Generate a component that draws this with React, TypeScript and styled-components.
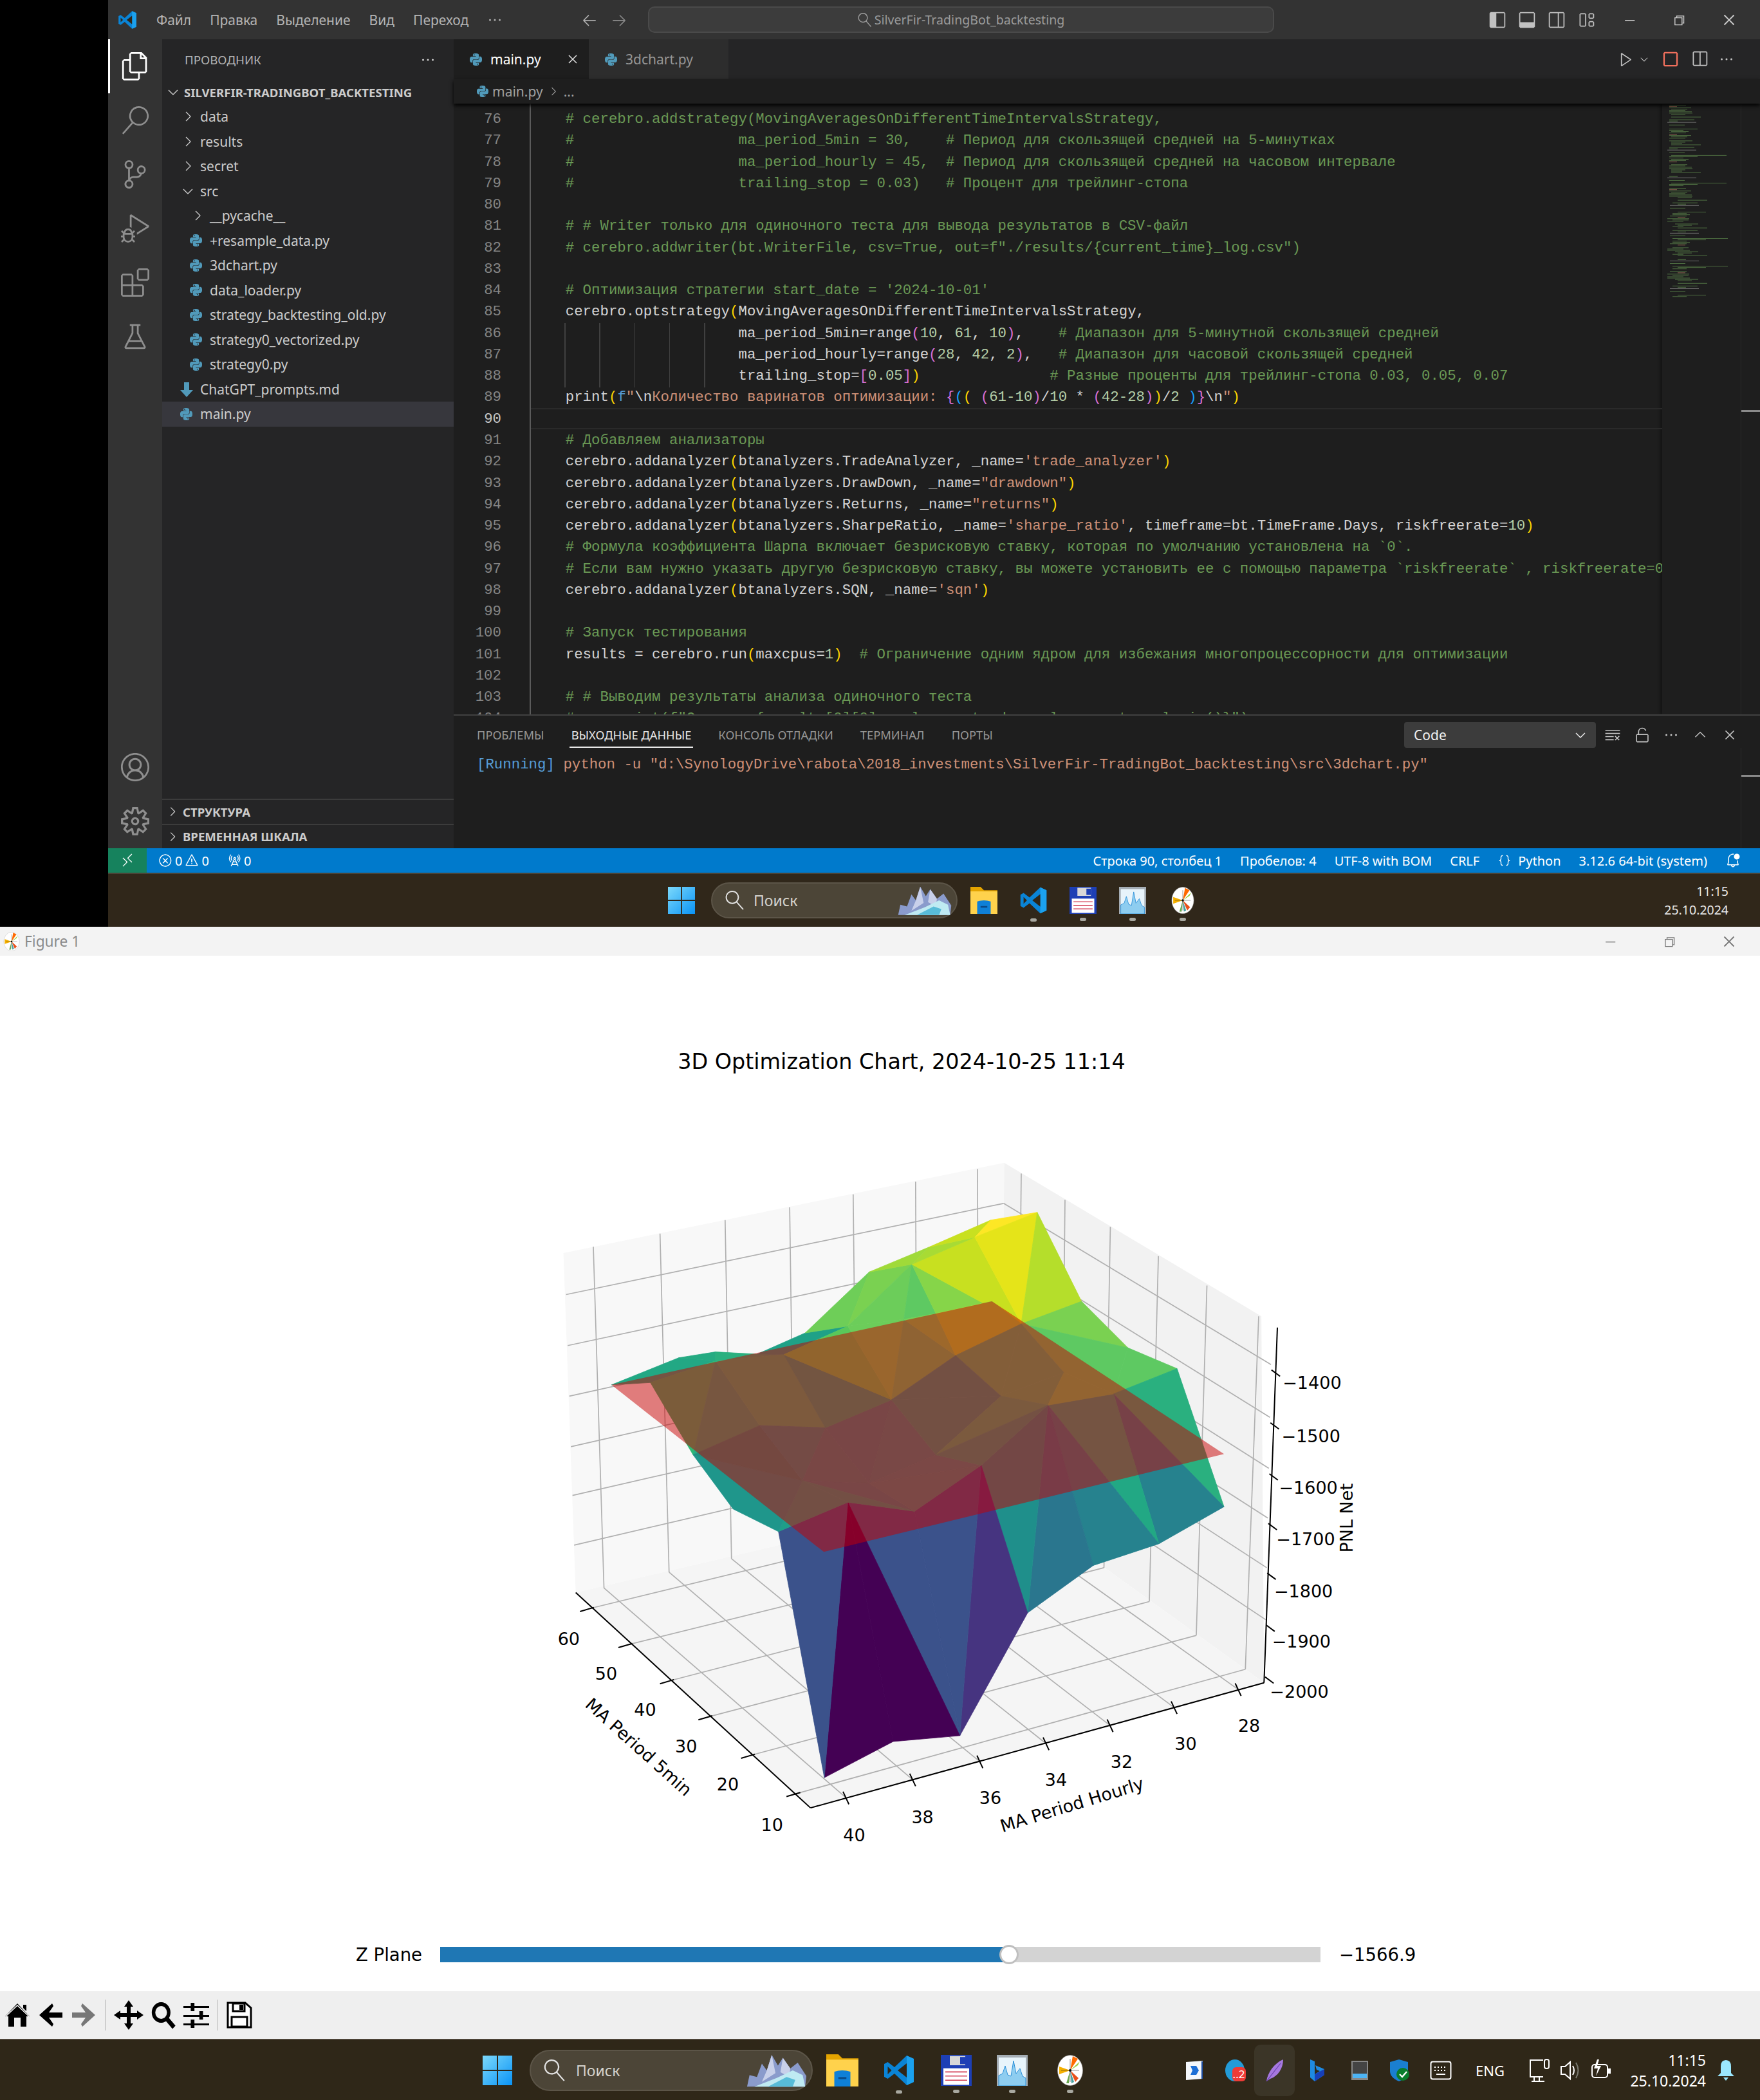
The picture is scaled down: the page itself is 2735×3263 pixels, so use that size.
import React from 'react';
import styled, { createGlobalStyle } from 'styled-components';
import { SiPython } from 'react-icons/si';
import {
    VscAccount,
    VscArrowLeft,
    VscArrowRight,
    VscBeaker,
    VscBellDot,
    VscChevronDown,
    VscChevronRight,
    VscChevronUp,
    VscChromeClose,
    VscChromeMinimize,
    VscChromeRestore,
    VscClearAll,
    VscClose,
    VscDebugAlt,
    VscDebugStop,
    VscEllipsis,
    VscError,
    VscExtensions,
    VscFiles,
    VscJson,
    VscLayout,
    VscLayoutPanel,
    VscLayoutSidebarLeft,
    VscLayoutSidebarRightOff,
    VscPlay,
    VscRadioTower,
    VscRemote,
    VscSearch,
    VscSettingsGear,
    VscSourceControl,
    VscSplitHorizontal,
    VscUnlock,
    VscWarning,
} from 'react-icons/vsc';

const uiFont = `'Noto Sans', 'Open Sans', sans-serif`;
const monoFont = `'Liberation Mono', monospace`;
const plotFont = `'DejaVu Sans', sans-serif`;

const GlobalStyle = createGlobalStyle`
    html, body {
        margin: 0;
        padding: 0;
        background: #fff;
    }
    * {
        box-sizing: border-box;
    }
`;

const colors = {
    t: '#d4d4d4',
    c: '#6a9955',
    s: '#ce9178',
    n: '#b5cea8',
    y: '#ffd700',
    p: '#da70d6',
    b: '#179fff',
    k: '#569cd6',
};
type Tok = [string, keyof typeof colors];

const analyzer = (name: string, rest: Tok[]): Tok[] => [
    ['    cerebro.addanalyzer', 't'],
    ['(', 'y'],
    [`btanalyzers.${name}, _name=`, 't'],
    ...rest,
];

const codeLines: Tok[][] = [
    [['    # cerebro.addstrategy(MovingAveragesOnDifferentTimeIntervalsStrategy,', 'c']],
    [['    #                   ma_period_5min = 30,    # Период для скользящей средней на 5-минутках', 'c']],
    [['    #                   ma_period_hourly = 45,  # Период для скользящей средней на часовом интервале', 'c']],
    [['    #                   trailing_stop = 0.03)   # Процент для трейлинг-стопа', 'c']],
    [],
    [['    # # Writer только для одиночного теста для вывода результатов в CSV-файл', 'c']],
    [['    # cerebro.addwriter(bt.WriterFile, csv=True, out=f"./results/{current_time}_log.csv")', 'c']],
    [],
    [["    # Оптимизация стратегии start_date = '2024-10-01'", 'c']],
    [['    cerebro.optstrategy', 't'], ['(', 'y'], ['MovingAveragesOnDifferentTimeIntervalsStrategy,', 't']],
    [
        ['                        ma_period_5min=range', 't'],
        ['(', 'p'],
        ['10', 'n'],
        [', ', 't'],
        ['61', 'n'],
        [', ', 't'],
        ['10', 'n'],
        [')', 'p'],
        [',', 't'],
        ['    # Диапазон для 5-минутной скользящей средней', 'c'],
    ],
    [
        ['                        ma_period_hourly=range', 't'],
        ['(', 'p'],
        ['28', 'n'],
        [', ', 't'],
        ['42', 'n'],
        [', ', 't'],
        ['2', 'n'],
        [')', 'p'],
        [',', 't'],
        ['   # Диапазон для часовой скользящей средней', 'c'],
    ],
    [
        ['                        trailing_stop=', 't'],
        ['[', 'p'],
        ['0.05', 'n'],
        [']', 'p'],
        [')', 'y'],
        ['               # Разные проценты для трейлинг-стопа 0.03, 0.05, 0.07', 'c'],
    ],
    [
        ['    print', 't'],
        ['(', 'y'],
        ['f', 'k'],
        ['"', 's'],
        ['\\n', 't'],
        ['Количество варинатов оптимизации: ', 's'],
        ['{', 'p'],
        ['(', 'b'],
        ['(', 'y'],
        [' ', 't'],
        ['(', 'p'],
        ['61-10', 'n'],
        [')', 'p'],
        ['/', 't'],
        ['10', 'n'],
        [' * ', 't'],
        ['(', 'p'],
        ['42-28', 'n'],
        [')', 'p'],
        [')', 'y'],
        ['/', 't'],
        ['2', 'n'],
        [' ', 't'],
        [')', 'b'],
        ['}', 'p'],
        ['\\n', 't'],
        ['"', 's'],
        [')', 'y'],
    ],
    [],
    [['    # Добавляем анализаторы', 'c']],
    analyzer('TradeAnalyzer', [["'trade_analyzer'", 's'], [')', 'y']]),
    analyzer('DrawDown', [['"drawdown"', 's'], [')', 'y']]),
    analyzer('Returns', [['"returns"', 's'], [')', 'y']]),
    analyzer('SharpeRatio', [
        ["'sharpe_ratio'", 's'],
        [', timeframe=bt.TimeFrame.Days, riskfreerate=', 't'],
        ['10', 'n'],
        [')', 'y'],
    ]),
    [['    # Формула коэффициента Шарпа включает безрисковую ставку, которая по умолчанию установлена на `0`.', 'c']],
    [['    # Если вам нужно указать другую безрисковую ставку, вы можете установить ее с помощью параметра `riskfreerate` , riskfreerate=0', 'c']],
    analyzer('SQN', [["'sqn'", 's'], [')', 'y']]),
    [],
    [['    # Запуск тестирования', 'c']],
    [
        ['    results = cerebro.run', 't'],
        ['(', 'y'],
        ['maxcpus=', 't'],
        ['1', 'n'],
        [')', 'y'],
        ['  # Ограничение одним ядром для избежания многопроцессорности для оптимизации', 'c'],
    ],
    [],
    [['    # # Выводим результаты анализа одиночного теста', 'c']],
    [['    #     print(f"Сделки: {results[0][0].analyzers.trade_analyzer.get_analysis()}")', 'c']],
];

const treeRows: { label: string; depth: number; kind: 'closed' | 'open' | 'py' | 'md'; active?: boolean }[] = [
    { label: 'data', depth: 0, kind: 'closed' },
    { label: 'results', depth: 0, kind: 'closed' },
    { label: 'secret', depth: 0, kind: 'closed' },
    { label: 'src', depth: 0, kind: 'open' },
    { label: '__pycache__', depth: 1, kind: 'closed' },
    { label: '+resample_data.py', depth: 1, kind: 'py' },
    { label: '3dchart.py', depth: 1, kind: 'py' },
    { label: 'data_loader.py', depth: 1, kind: 'py' },
    { label: 'strategy_backtesting_old.py', depth: 1, kind: 'py' },
    { label: 'strategy0_vectorized.py', depth: 1, kind: 'py' },
    { label: 'strategy0.py', depth: 1, kind: 'py' },
    { label: 'ChatGPT_prompts.md', depth: 0, kind: 'md' },
    { label: 'main.py', depth: 0, kind: 'py', active: true },
];

const App: React.FC = () => (
    <Page>
        <GlobalStyle />
        <TopArea>
            <Gutter />
            <Desktop>
                <TitleBar>
                    <TitleLeft>
                        <VsLogo size={30} />
                        <MenuItem>Файл</MenuItem>
                        <MenuItem>Правка</MenuItem>
                        <MenuItem>Выделение</MenuItem>
                        <MenuItem>Вид</MenuItem>
                        <MenuItem>Переход</MenuItem>
                        <VscEllipsis size={24} color="#b0b0b0" />
                        <NavArrows>
                            <VscArrowLeft size={26} color="#b0b0b0" />
                            <VscArrowRight size={26} color="#8a8a8a" />
                        </NavArrows>
                    </TitleLeft>
                    <CommandBox>
                        <VscSearch size={22} style={{ transform: 'scaleX(-1)' }} />
                        SilverFir-TradingBot_backtesting
                    </CommandBox>
                    <TitleRight>
                        <VscLayoutSidebarLeft size={28} />
                        <VscLayoutPanel size={28} />
                        <VscLayoutSidebarRightOff size={28} />
                        <VscLayout size={28} />
                        <WindowButtons $color="#cfcfcf" $gap={55}>
                            <VscChromeMinimize size={22} />
                            <VscChromeRestore size={22} />
                            <VscChromeClose size={24} />
                        </WindowButtons>
                    </TitleRight>
                </TitleBar>
                <Workbench>
                    <ActivityBar>
                        <ActivityItem $active>
                            <VscFiles size={44} color="#fff" />
                        </ActivityItem>
                        <ActivityItem>
                            <VscSearch size={44} />
                        </ActivityItem>
                        <ActivityItem>
                            <VscSourceControl size={44} />
                        </ActivityItem>
                        <ActivityItem>
                            <VscDebugAlt size={44} />
                        </ActivityItem>
                        <ActivityItem>
                            <VscExtensions size={44} />
                        </ActivityItem>
                        <ActivityItem>
                            <VscBeaker size={44} />
                        </ActivityItem>
                        <ActivitySpacer />
                        <ActivityItem>
                            <VscAccount size={44} />
                        </ActivityItem>
                        <ActivityItem>
                            <VscSettingsGear size={44} />
                        </ActivityItem>
                    </ActivityBar>
                    <SideBar>
                        <SideHeader>
                            ПРОВОДНИК
                            <VscEllipsis size={24} color="#cccccc" />
                        </SideHeader>
                        <RootRow>
                            <VscChevronDown size={24} />
                            SILVERFIR-TRADINGBOT_BACKTESTING
                        </RootRow>
                        {treeRows.map((r) => (
                            <TreeRow key={r.label} $depth={r.depth} $active={r.active}>
                                <TreeIcon>
                                    {r.kind === 'closed' && <VscChevronRight size={24} />}
                                    {r.kind === 'open' && <VscChevronDown size={24} />}
                                    {r.kind === 'py' && <SiPython size={19} color="#519aba" />}
                                    {r.kind === 'md' && <MdIcon />}
                                </TreeIcon>
                                {r.label}
                            </TreeRow>
                        ))}
                        <SideSpacer />
                        <CollapsedPane>
                            <VscChevronRight size={22} />
                            СТРУКТУРА
                        </CollapsedPane>
                        <CollapsedPane>
                            <VscChevronRight size={22} />
                            ВРЕМЕННАЯ ШКАЛА
                        </CollapsedPane>
                    </SideBar>
                    <EditorColumn>
                        <TabStrip>
                            <Tab $active>
                                <SiPython size={19} color="#519aba" />
                                <TabLabel>main.py</TabLabel>
                                <VscClose size={24} color="#e0e0e0" />
                            </Tab>
                            <Tab>
                                <SiPython size={19} color="#519aba" />
                                <TabLabel>3dchart.py</TabLabel>
                            </Tab>
                            <EditorActions>
                                <VscPlay size={26} />
                                <VscChevronDown size={18} />
                                <VscDebugStop size={30} color="#f1705d" />
                                <VscSplitHorizontal size={28} />
                                <VscEllipsis size={24} />
                            </EditorActions>
                        </TabStrip>
                        <Breadcrumb>
                            <SiPython size={18} color="#519aba" />
                            main.py
                            <VscChevronRight size={20} />
                            ...
                        </Breadcrumb>
                        <CodeArea>
                            <LineNumbers>
                                {codeLines.map((_, i) => (
                                    <LineNumber key={i} $current={i + 76 === 90}>
                                        {i + 76}
                                    </LineNumber>
                                ))}
                            </LineNumbers>
                            <CodePane>
                                <CurrentLine />
                                <IndentGuides>
                                    {[0, 1, 2, 3, 4].map((i) => (
                                        <IndentGuide key={i} />
                                    ))}
                                </IndentGuides>
                                {codeLines.map((toks, i) => (
                                    <CodeLine key={i}>
                                        {toks.map(([text, color], j) => (
                                            <Token key={j} $c={colors[color]}>
                                                {text}
                                            </Token>
                                        ))}
                                    </CodeLine>
                                ))}
                            </CodePane>
                            <Minimap>
                                <MinimapDrawing />
                            </Minimap>
                            <ScrollGutter>
                                <ScrollMark $top={476} />
                            </ScrollGutter>
                        </CodeArea>
                        <Panel>
                            <PanelHeader>
                                <PanelTab>ПРОБЛЕМЫ</PanelTab>
                                <PanelTab $active>ВЫХОДНЫЕ ДАННЫЕ</PanelTab>
                                <PanelTab>КОНСОЛЬ ОТЛАДКИ</PanelTab>
                                <PanelTab>ТЕРМИНАЛ</PanelTab>
                                <PanelTab>ПОРТЫ</PanelTab>
                                <PanelTools>
                                    <OutputSelect>
                                        Code
                                        <VscChevronDown size={24} />
                                    </OutputSelect>
                                    <VscClearAll size={26} />
                                    <VscUnlock size={26} />
                                    <VscEllipsis size={24} />
                                    <VscChevronUp size={26} />
                                    <VscClose size={26} />
                                </PanelTools>
                            </PanelHeader>
                            <OutputBody>
                                <OutputText>
                                    <Token $c="#569cd6">[Running]</Token>
                                    <Token $c="#ce9178">
                                        {' '}
                                        python -u "d:\SynologyDrive\rabota\2018_investments\SilverFir-TradingBot_backtesting\src\3dchart.py"
                                    </Token>
                                </OutputText>
                                <ScrollGutter>
                                    <ScrollMark $top={42} />
                                </ScrollGutter>
                            </OutputBody>
                        </Panel>
                    </EditorColumn>
                </Workbench>
                <StatusBar>
                    <RemoteBadge>
                        <VscRemote size={24} />
                    </RemoteBadge>
                    <StatusLeft>
                        <VscError size={22} />0
                        <VscWarning size={22} />0
                        <StatusGap />
                        <VscRadioTower size={22} />0
                    </StatusLeft>
                    <StatusRight>
                        <span>Строка 90, столбец 1</span>
                        <span>Пробелов: 4</span>
                        <span>UTF-8 with BOM</span>
                        <span>CRLF</span>
                        <StatusPair>
                            <VscJson size={22} />
                            Python
                        </StatusPair>
                        <span>3.12.6 64-bit (system)</span>
                        <VscBellDot size={24} />
                    </StatusRight>
                </StatusBar>
                <TopTaskbar>
                    <TaskSlot $ml={870}>
                        <WinLogo size={42} />
                    </TaskSlot>
                    <SearchPill $w={383} $h={56} $ml={25}>
                        <PillIcon size={30} />
                        <PillText $gap={14}>Поиск</PillText>
                        <Crystal width={86} />
                    </SearchPill>
                    <TaskSlot $ml={20}>
                        <FolderIcon size={42} />
                    </TaskSlot>
                    <TaskSlot $ml={34} $dot>
                        <VsLogo size={44} />
                    </TaskSlot>
                    <TaskSlot $ml={34} $dot>
                        <FloppyIcon size={42} />
                    </TaskSlot>
                    <TaskSlot $ml={35} $dot>
                        <ChartIcon size={42} />
                    </TaskSlot>
                    <TaskSlot $ml={36} $dot>
                        <PieIcon size={42} />
                    </TaskSlot>
                    <TopClock>
                        <span>11:15</span>
                        <span>25.10.2024</span>
                    </TopClock>
                </TopTaskbar>
            </Desktop>
        </TopArea>
        <FigureTitle>
            <PieIcon size={30} />
            <FigureName>Figure 1</FigureName>
            <WindowButtons $color="#777" $gap={70}>
                <VscChromeMinimize size={22} />
                <VscChromeRestore size={22} />
                <VscChromeClose size={24} />
            </WindowButtons>
        </FigureTitle>
        <Canvas>
            <ChartTitle>3D Optimization Chart, 2024-10-25 11:14</ChartTitle>
            <ChartHolder>
                <Chart3D />
            </ChartHolder>
            <SliderRow>
                <SliderLabel>Z Plane</SliderLabel>
                <SliderTrack>
                    <SliderFill style={{ width: `${(884 / 1368) * 100}%` }} />
                    <SliderKnob style={{ left: `${(884 / 1368) * 100}%` }} />
                </SliderTrack>
                <SliderValue>−1566.9</SliderValue>
            </SliderRow>
        </Canvas>
        <Toolbar>
            <ToolGlyph><HomeGlyph /></ToolGlyph>
            <ToolGlyph><BackGlyph color="#000" /></ToolGlyph>
            <ToolGlyph><BackGlyph color="#777" flip /></ToolGlyph>
            <ToolSep />
            <ToolGlyph><PanGlyph /></ToolGlyph>
            <ToolGlyph><ZoomGlyph /></ToolGlyph>
            <ToolGlyph><SlidersGlyph /></ToolGlyph>
            <ToolSep />
            <ToolGlyph><SaveGlyph /></ToolGlyph>
        </Toolbar>
        <BottomTaskbar>
            <TaskSlot $ml={750}>
                <WinLogo size={46} />
            </TaskSlot>
            <SearchPill $w={440} $h={64} $ml={27}>
                <PillIcon size={34} />
                <PillText $gap={16}>Поиск</PillText>
                <Crystal width={96} />
            </SearchPill>
            <TaskSlot $ml={21}>
                <FolderIcon size={50} />
            </TaskSlot>
            <TaskSlot $ml={38} $dot>
                <VsLogo size={50} />
            </TaskSlot>
            <TaskSlot $ml={40} $dot>
                <FloppyIcon size={48} />
            </TaskSlot>
            <TaskSlot $ml={39} $dot>
                <ChartIcon size={48} />
            </TaskSlot>
            <TaskSlot $ml={42} $dot>
                <PieIcon size={48} />
            </TaskSlot>
            <Tray>
                <DocTray />
                <BadgeTray />
                <FeatherSlot>
                    <FeatherTray />
                </FeatherSlot>
                <BingTray />
                <ServerTray />
                <ShieldTray />
                <KeyboardTray />
                <TrayText>ENG</TrayText>
                <MonitorTray />
                <SpeakerTray />
                <BatteryTray />
            </Tray>
            <BottomClock>
                <span>11:15</span>
                <span>25.10.2024</span>
            </BottomClock>
            <BellGlyph />
        </BottomTaskbar>
    </Page>
);

/* ---------- 3d chart, points taken from the picture ---------- */

const sx = (x: number) => x / 1.206;
const sy = (y: number) => y / 1.4255;

const pts: Record<string, [number, number]> = {
    A: [955, 148], B: [868, 165], C: [838, 203], D: [752, 225], E: [720, 263], F: [640, 280],
    G: [1038, 345], H: [925, 395], I: [1125, 448], J: [1217, 494], K: [1305, 800], L: [1183, 882],
    M: [1060, 930], N: [937, 1035], O: [810, 1307], P: [685, 1320], Q: [556, 1400], R: [470, 855],
    S: [385, 805], T: [310, 685], U: [230, 525], V: [157, 530], W: [283, 470], X: [352, 457],
    Y: [430, 462], Z: [520, 415], a: [600, 400], b: [705, 385], c: [765, 372], d: [870, 345],
    e: [352, 477], f: [480, 463], g: [435, 620], h: [558, 625], i: [682, 563], j: [802, 465],
    k: [887, 555], l: [975, 575], n: [1005, 503], o: [1098, 550], p: [765, 685], q: [850, 708],
    r: [640, 748], s: [725, 810], t: [600, 790], u: [515, 742],
};

const facets: [string, string][] = [
    ['#22a884', 'V W e U'], ['#25ab82', 'W X e'], ['#2ab07f', 'X Y f e'], ['#1fa187', 'Y Z a f'],
    ['#6ece58', 'Z F a'], ['#7ad151', 'F E a'], ['#6ccd5a', 'E b a'], ['#5ec962', 'E c b'],
    ['#86d549', 'E H d c'], ['#c8e020', 'E C H'], ['#a8db34', 'D C E'], ['#a0da39', 'F D E'],
    ['#c8e020', 'D B C'], ['#fde725', 'B A C'], ['#e5e419', 'C A H'], ['#b5de2b', 'A G H'],
    ['#7ad151', 'G I H'], ['#5ec962', 'H I o n'], ['#5ec962', 'I J o'], ['#2ab07f', 'o K J'],
    ['#26828e', 'o L K'], ['#22a884', 'l L o'], ['#26828e', 'l M L'], ['#2a768e', 'l N M'],
    ['#1f8f8b', 'q l N'], ['#463480', 'q N O'], ['#3b528b', 's q O'], ['#3b528b', 't s O'],
    ['#440154', 't O P'], ['#440154', 't P Q'], ['#3b528b', 'R t Q'], ['#1f9e89', 'R u t'],
    ['#1f968b', 'S R u T'], ['#2eb874', 'U e T'], ['#27ad81', 'e g T'], ['#32b47a', 'e f h g'],
    ['#209080', 'T g u'], ['#20968b', 'g h u'], ['#2a8f8b', 'h r u'], ['#2a8c8c', 'u r s'],
    ['#1f9e89', 'u s t'], ['#2a8c8c', 'h i r'], ['#2a908c', 'i p r'], ['#2e908c', 'r p q'],
    ['#30908a', 'r q s'], ['#1eaa82', 'f i h'], ['#5ac85a', 'f a i'], ['#6ccd5a', 'a b i'],
    ['#56c667', 'b j i'], ['#73d056', 'b c j'], ['#9bd93c', 'c d H j'], ['#3fbc73', 'j H k'],
    ['#1fa187', 'i j k'], ['#3fbc73', 'H n k'], ['#3ebc73', 'k n l'], ['#5ec962', 'n o l'],
    ['#1fa187', 'i k p'], ['#2fb47c', 'k l p'], ['#20a386', 'p l q'],
];

const poly = (list: [number, number][]) => list.map(([x, y]) => `${sx(x)},${sy(y)}`).join(' ');

const leftVerticals: [number, number, number, number][] = [
    [123, 224, 143, 980], [248, 195, 265, 945], [370, 165, 382, 915], [491, 137, 500, 882],
    [610, 108, 617, 852], [727, 80, 730, 825], [843, 52, 845, 795],
];
const rightVerticals: [number, number, number, number][] = [
    [925, 62, 918, 795], [1007, 120, 1000, 868], [1092, 180, 1080, 935],
    [1182, 245, 1165, 1010], [1273, 310, 1253, 1085], [1370, 378, 1345, 1160],
];
const zLeft = [330, 443, 555, 667, 775, 885];
const zBack = [128, 235, 342, 449, 556, 663];
const zRight = [505, 622, 735, 845, 955, 1070];
const xTicks: [number, number][] = [[118, 1025], [190, 1105], [268, 1185], [340, 1265], [420, 1350], [505, 1435]];
const yTicks: [number, number][] = [[597, 1445], [722, 1405], [848, 1365], [972, 1325], [1092, 1285], [1212, 1245], [1332, 1205]];
const xLabels: [string, number, number][] = [['60', 77, 1093], ['50', 147, 1170], ['40', 220, 1250], ['30', 297, 1330], ['20', 375, 1415], ['10', 458, 1505]];
const yLabels: [string, number, number][] = [['40', 612, 1528], ['38', 740, 1487], ['36', 867, 1445], ['34', 990, 1405], ['32', 1113, 1365], ['30', 1233, 1325], ['28', 1352, 1285]];
const zLabels: [string, number, number][] = [['−1400', 1470, 525], ['−1500', 1468, 643], ['−1600', 1463, 758], ['−1700', 1458, 872], ['−1800', 1454, 987], ['−1900', 1450, 1098], ['−2000', 1446, 1210]];
const floorEnds: [number, number][] = [[918, 795], [1000, 868], [1080, 935], [1165, 1010], [1253, 1085], [1345, 1160]];

const Grid: React.FC<{ a: [number, number]; b: [number, number] }> = ({ a, b }) => (
    <line x1={sx(a[0])} y1={sy(a[1])} x2={sx(b[0])} y2={sy(b[1])} stroke="#b0b0b0" strokeWidth={1.7} />
);

const Chart3D: React.FC = () => (
    <svg width={1300} height={1100} viewBox="0 0 1300 1100">
        <polygon points={poly([[67, 238], [893, 38], [888, 770], [90, 990]])} fill="#f8f8f8" />
        <polygon points={poly([[893, 38], [1375, 378], [1380, 1190], [888, 770]])} fill="#f2f2f2" />
        <polygon points={poly([[90, 990], [888, 770], [1380, 1190], [530, 1467]])} fill="#f5f5f5" />
        {leftVerticals.map(([a, b, c, d], i) => (
            <Grid key={i} a={[a, b]} b={[c, d]} />
        ))}
        {rightVerticals.map(([a, b, c, d], i) => (
            <Grid key={i} a={[a, b]} b={[c, d]} />
        ))}
        {zLeft.map((y, i) => (
            <Grid key={y} a={[72 + i * 3, y]} b={[892, zBack[i]]} />
        ))}
        {zRight.map((y, i) => (
            <Grid key={y} a={[892, zBack[i]]} b={[1393 - i * 2, y - 20]} />
        ))}
        {xTicks.map((t, i) => (
            <Grid key={i} a={t} b={floorEnds[i]} />
        ))}
        {yTicks.map((t, i) => (
            <Grid key={i} a={t} b={[leftVerticals[i][2], leftVerticals[i][3]]} />
        ))}
        {[[90, 990, 530, 1467], [530, 1467, 1380, 1190], [1380, 1190, 1405, 403]].map(([a, b, c, d], i) => (
            <line key={i} x1={sx(a)} y1={sy(b)} x2={sx(c)} y2={sy(d)} stroke="#000" strokeWidth={2} />
        ))}
        {xTicks.map(([x, y], i) => (
            <line key={i} x1={sx(x - 20)} y1={sy(y + 7)} x2={sx(x + 6)} y2={sy(y - 2)} stroke="#000" strokeWidth={2} />
        ))}
        {yTicks.map(([x, y], i) => (
            <line key={i} x1={sx(x - 6)} y1={sy(y - 14)} x2={sx(x + 5)} y2={sy(y + 14)} stroke="#000" strokeWidth={2} />
        ))}
        {[505, 622, 735, 845, 955, 1070, 1185].map((y, i) => (
            <line key={y} x1={sx(1394 - i * 2)} y1={sy(y - 8)} x2={sx(1410 - i * 2)} y2={sy(y + 6)} stroke="#000" strokeWidth={2} />
        ))}
        {facets.map(([fill, names], i) => {
            const p = poly(names.split(' ').map((n) => pts[n]));
            return <polygon key={i} points={p} fill={fill} stroke={fill} strokeWidth={0.8} />;
        })}
        <polygon points={poly([[157, 530], [870, 345], [1305, 683], [555, 900]])} fill="rgb(200,0,0)" fillOpacity={0.5} />
        {[...xLabels, ...yLabels, ...zLabels].map(([label, x, y]) => (
            <PlotText key={label + x} x={sx(x)} y={sy(y)} textAnchor="middle" dominantBaseline="central">
                {label}
            </PlotText>
        ))}
        <PlotText transform={`translate(${sx(208)} ${sy(1332)}) rotate(42)`} textAnchor="middle" dominantBaseline="central">
            MA Period 5min
        </PlotText>
        <PlotText transform={`translate(${sx(1020)} ${sy(1460)}) rotate(-17)`} textAnchor="middle" dominantBaseline="central">
            MA Period Hourly
        </PlotText>
        <PlotText transform={`translate(${sx(1535)} ${sy(825)}) rotate(-90)`} textAnchor="middle" dominantBaseline="central">
            PNL Net
        </PlotText>
    </svg>
);

const PlotText = styled.text`
    font-family: ${plotFont};
    font-size: 27px;
    fill: #000;
`;

/* ---------- small drawn icons ---------- */

const MinimapDrawing: React.FC = () => {
    const rows: React.ReactNode[] = [];
    let seed = 17;
    for (let i = 0; i < 146; i++) {
        seed = (seed * 73 + 41) % 211;
        if (seed % 6 === 0 || i % 9 === 8) {
            continue;
        }
        const indent = i < 70 ? (seed % 3) * 3 : (seed % 5) * 4;
        const width = 10 + (seed % 38) + (seed % 13 === 0 ? 46 : 0);
        const fill = seed % 3 === 0 ? '#8a8a8a' : seed % 11 === 0 ? '#a9745f' : '#5f8a4d';
        rows.push(<rect key={i} x={indent} y={i * 2.05} width={Math.min(width, 96 - indent)} height={1} fill={fill} fillOpacity={0.75} />);
    }
    return (
        <svg width={100} height={310} viewBox="0 0 100 310">
            {rows}
        </svg>
    );
};

const VsLogo: React.FC<{ size: number }> = ({ size }) => (
    <svg width={size} height={size} viewBox="0 0 100 100">
        <path d="M74 4 96 14v72L74 96 36 60 15 76 4 70V30l11-6 21 16z" fill="#0a84d6" />
        <path d="M74 4 96 14v72L74 96z" fill="#1ba1ee" />
        <path d="M15 38v24l12-12z" fill="#2f2618" />
        <path d="M74 28 46 50l28 22z" fill="#2f2618" />
    </svg>
);

const MdIcon: React.FC = () => (
    <svg width={20} height={26} viewBox="0 0 20 26">
        <path d="M6 2h8v12h6L10 25 0 14h6z" fill="#519aba" />
    </svg>
);

const WinLogo: React.FC<{ size: number }> = ({ size }) => (
    <svg width={size} height={size} viewBox="0 0 46 46">
        <defs>
            <linearGradient id="win" x1="0" y1="0" x2="1" y2="1">
                <stop offset="0" stopColor="#7cd9fb" />
                <stop offset="1" stopColor="#0a93f5" />
            </linearGradient>
        </defs>
        <path d="M0 0h22v22H0zM24 0h22v22H24zM0 24h22v22H0zM24 24h22v22H24z" fill="url(#win)" />
    </svg>
);

const FolderIcon: React.FC<{ size: number }> = ({ size }) => (
    <svg width={size} height={size} viewBox="0 0 48 48">
        <path d="M0 0h18l6 6h24v42H0z" fill="#e4a400" />
        <path d="M0 8h48v40H0z" fill="#ffd24c" />
        <path d="M12 26q12-4 24 0v22H12z" fill="#0f80d7" />
        <path d="M18 34h12v3H18z" fill="#0b4a87" />
    </svg>
);

const FloppyIcon: React.FC<{ size: number }> = ({ size }) => (
    <svg width={size} height={size} viewBox="0 0 48 60" preserveAspectRatio="none">
        <path d="M0 0h48v60H0z" fill="#1d3fb5" />
        <path d="M14 2h24v18H14z" fill="#d8d8d8" />
        <path d="M30 4h8v14h-8z" fill="#1d3fb5" />
        <path d="M4 26h40v32H4z" fill="#fff" />
        <path d="M7 32h34v2H7zM7 40h34v2H7zM7 48h34v2H7z" fill="#d33f56" />
    </svg>
);

const ChartIcon: React.FC<{ size: number }> = ({ size }) => (
    <svg width={size} height={size} viewBox="0 0 48 48">
        <path d="M0 0h48v48H0z" fill="#a5adb4" />
        <path d="M3 4h42v40H3z" fill="#e8f4fb" />
        <path d="M3 32l6-3 4-12 4 14 5 2 4-24 4 20 6-8 4 12 5 3v12H3z" fill="#8ecdf0" stroke="#2b90d9" strokeWidth={1} />
    </svg>
);

const PieIcon: React.FC<{ size: number }> = ({ size }) => (
    <svg width={size} height={size} viewBox="0 0 40 48">
        <ellipse cx="20" cy="24" rx="19.5" ry="23.5" fill="#fff" stroke="#aaa" strokeWidth={0.6} />
        <path d="M20 24 24 2 32 6z" fill="#ff6a00" />
        <path d="M20 24 3 18 3 30z" fill="#f5b000" />
        <path d="M20 24 32 16 35 10z" fill="#9ccc3c" />
        <path d="M20 24 33 36 28 42z" fill="#e8501a" />
        <path d="M20 24 14 44 18 44z" fill="#6aa84f" />
        <path d="M20 24 22 44 26 42z" fill="#46a0a0" />
        <circle cx="20" cy="24" r="2" fill="#000" />
        <path d="M20 6v36M6 24h28" stroke="#222" strokeWidth={0.5} />
    </svg>
);

const Crystal: React.FC<{ width: number }> = ({ width }) => (
    <svg width={width} height={width * 0.56} viewBox="0 0 100 72" preserveAspectRatio="none">
        <path d="M2 70 6 46 18 50 26 22 34 36 42 4 52 26 60 10 72 32 84 20 98 48 96 70z" fill="#8a9bcc" />
        <path d="M26 60 34 36 42 4 48 42zM60 10 72 32 70 50 56 40z" fill="#c8d0ea" />
        <path d="M14 70 50 52 76 36 92 46 96 70z" fill="#bfeaf2" />
        <path d="M36 70 66 50 80 56 76 70z" fill="#58bcd8" />
    </svg>
);

const DocTray: React.FC = () => (
    <TraySvg width={30} height={30} viewBox="0 0 30 30" $ml={0}>
        <path d="M2 2 28 0v28L2 30z" fill="#f4f7fb" />
        <path d="M9 8h9l4 7-4 7H9l3-7z" fill="#1d6fd6" />
        <path d="M26 1h2v27h-2z" fill="#1d4fa8" />
    </TraySvg>
);

const BadgeTray: React.FC = () => (
    <TraySvg width={34} height={34} viewBox="0 0 34 34" $ml={33}>
        <ellipse cx="15" cy="17" rx="15" ry="17" fill="#239bd8" />
        <rect x="11" y="12" width="21" height="22" rx="6" fill="#ef3b36" />
        <TrayBadgeText x="21" y="29" textAnchor="middle">
            ..2
        </TrayBadgeText>
    </TraySvg>
);

const TrayBadgeText = styled.text`
    font-family: ${uiFont};
    font-size: 17px;
    fill: #fff;
`;

const FeatherTray: React.FC = () => (
    <svg width={30} height={34} viewBox="0 0 30 34">
        <path d="M2 34C4 20 14 6 28 0 28 14 20 26 8 30z" fill="#a678e0" />
        <path d="M2 34 24 6" stroke="#6b42b0" strokeWidth={1.2} />
    </svg>
);

const BingTray: React.FC = () => (
    <TraySvg width={24} height={34} viewBox="0 0 24 34" $ml={22}>
        <path d="M2 0 9 3v20l8-5-5-2-2-7 14 6v9L9 34 2 28z" fill="#1f8ae0" />
        <path d="M9 23 24 15v9L9 34z" fill="#173fb8" />
    </TraySvg>
);

const ServerTray: React.FC = () => (
    <TraySvg width={26} height={30} viewBox="0 0 26 30" $ml={42}>
        <path d="M0 0h26v30H0z" fill="#888" />
        <path d="M2 2h22v18H2z" fill="#444" />
        <path d="M2 20h22v7H2z" fill="#4db4f5" />
    </TraySvg>
);

const ShieldTray: React.FC = () => (
    <TraySvg width={32} height={34} viewBox="0 0 32 34" $ml={34}>
        <path d="M14 0l14 4v14q0 10-14 16Q0 28 0 18V4z" fill="#1a7fd0" />
        <circle cx="20" cy="23" r="10" fill="#0a7d2c" />
        <path d="M15 23l4 4 7-8" fill="none" stroke="#fff" strokeWidth={2.4} />
    </TraySvg>
);

const KeyboardTray: React.FC = () => (
    <TraySvg width={34} height={30} viewBox="0 0 34 30" $ml={30}>
        <rect x="1.5" y="1.5" width="31" height="27" rx="3" fill="none" stroke="#fff" strokeWidth={2} />
        <path d="M7 9h2v2H7zM12 9h2v2h-2zM17 9h2v2h-2zM22 9h2v2h-2zM7 14h2v2H7zM12 14h2v2h-2zM17 14h2v2h-2zM22 14h2v2h-2zM10 20h14v2H10z" fill="#fff" />
    </TraySvg>
);

const MonitorTray: React.FC = () => (
    <TraySvg width={32} height={36} viewBox="0 0 32 36" $ml={38}>
        <path d="M22 2H2v26h20M8 28v7M16 28v7M4 35h20" fill="none" stroke="#fff" strokeWidth={2} />
        <rect x="24" y="1" width="7" height="14" rx="3" fill="none" stroke="#fff" strokeWidth={2} />
    </TraySvg>
);

const SpeakerTray: React.FC = () => (
    <TraySvg width={32} height={34} viewBox="0 0 32 34" $ml={16}>
        <path d="M2 11h6l8-7v26l-8-7H2z" fill="none" stroke="#fff" strokeWidth={2} />
        <path d="M20 10q4 7 0 14" fill="none" stroke="#fff" strokeWidth={2} />
        <path d="M25 5q7 12 0 24" fill="none" stroke="#7a7a70" strokeWidth={2} />
    </TraySvg>
);

const BatteryTray: React.FC = () => (
    <TraySvg width={32} height={34} viewBox="0 0 32 34" $ml={16}>
        <rect x="2" y="8" width="24" height="20" rx="4" fill="none" stroke="#fff" strokeWidth={2} />
        <path d="M27 14h4v8h-4zM10 0 5 14h6L8 26l8-16h-6l3-10z" fill="#fff" />
    </TraySvg>
);

const BellGlyph: React.FC = () => (
    <BellHolder>
        <svg width={26} height={32} viewBox="0 0 26 32">
            <path d="M13 0q8 0 8 10v10l5 5H0l5-5V10Q5 0 13 0z" fill="#9be8ff" />
            <path d="M9 27h8l-4 5z" fill="#9be8ff" />
        </svg>
    </BellHolder>
);

const HomeGlyph: React.FC = () => (
    <svg width={42} height={40} viewBox="0 0 42 40">
        <path d="M21 2 40 22h-5v16H26V24H16v14H7V22H2z" fill="#000" />
        <path d="M30 4h5v10l-5-5z" fill="#000" />
        <path d="M3 17 21 0l18 17" fill="none" stroke="#fff" strokeWidth={1.5} transform="translate(0 5)" />
    </svg>
);

const BackGlyph: React.FC<{ color: string; flip?: boolean }> = ({ color, flip }) => (
    <svg width={40} height={40} viewBox="0 0 40 40" style={flip ? { transform: 'scaleX(-1)' } : undefined}>
        <path d="M22 2 2 20l20 18 2-4-7-10h21v-8H17l7-10z" fill={color} />
    </svg>
);

const PanGlyph: React.FC = () => (
    <svg width={46} height={46} viewBox="0 0 46 46">
        <path d="M23 0l7 10h-4v10h10v-4l10 7-10 7v-4H26v10h4l-7 10-7-10h4V26H10v4L0 23l10-7v4h10V10h-4z" fill="#000" />
    </svg>
);

const ZoomGlyph: React.FC = () => (
    <svg width={40} height={44} viewBox="0 0 44 44" preserveAspectRatio="none">
        <circle cx="18" cy="18" r="13" fill="none" stroke="#000" strokeWidth={6} />
        <path d="M27 27 40 41" stroke="#000" strokeWidth={7} />
    </svg>
);

const SlidersGlyph: React.FC = () => (
    <svg width={40} height={40} viewBox="0 0 42 40" preserveAspectRatio="none">
        <path d="M0 6h42v3H0zM0 20h42v3H0zM0 33h42v3H0z" fill="#000" />
        <path d="M12 1h6v13h-6zM26 14h6v13h-6zM12 27h6v13h-6z" fill="#000" />
    </svg>
);

const SaveGlyph: React.FC = () => (
    <svg width={40} height={42} viewBox="0 0 40 42">
        <path d="M2 2h27l9 8v30H2z" fill="#fff" stroke="#000" strokeWidth={3} />
        <path d="M10 3h18v12H10z" fill="#fff" stroke="#000" strokeWidth={3} />
        <path d="M20 5h6v8h-6z" fill="#000" />
        <path d="M8 24h24v15H8z" fill="#fff" stroke="#000" strokeWidth={3} />
    </svg>
);

/* ---------- page ---------- */

const Page = styled.div`
    width: 2735px;
    height: 3263px;
    display: flex;
    flex-direction: column;
    overflow: hidden;
    background: #fff;
    font-family: ${uiFont};
`;

const TopArea = styled.div`
    height: 1440px;
    display: flex;
`;

const Gutter = styled.div`
    width: 168px;
    background: #000;
`;

const Desktop = styled.div`
    flex: 1;
    min-width: 0;
    display: flex;
    flex-direction: column;
`;

const TitleBar = styled.div`
    height: 61px;
    display: grid;
    grid-template-columns: 839px 973px 1fr;
    align-items: center;
    background: #333333;
`;

const TitleLeft = styled.div`
    display: flex;
    align-items: center;
    padding-left: 15px;
    color: #b4b4b4;

    > svg:first-child {
        margin-right: 30px;
    }
`;

const MenuItem = styled.span`
    font-size: 21px;
    margin-right: 29px;
`;

const NavArrows = styled.div`
    display: flex;
    gap: 20px;
    margin-left: 122px;
`;

const CommandBox = styled.div`
    height: 41px;
    display: flex;
    align-items: center;
    justify-content: center;
    gap: 4px;
    background: #3c3c3c;
    border: 2px solid #4a4a4a;
    border-radius: 10px;
    color: #9a9a9a;
    font-size: 19.6px;
`;

const TitleRight = styled.div`
    display: flex;
    align-items: center;
    gap: 18px;
    padding-left: 333px;
    color: #c2c2c2;
`;

const WindowButtons = styled.div<{ $color: string; $gap: number }>`
    display: flex;
    align-items: center;
    gap: ${(p) => p.$gap}px;
    margin-left: auto;
    padding-right: 36px;
    color: ${(p) => p.$color};
`;

const Workbench = styled.div`
    height: 1257px;
    display: flex;
`;

const ActivityBar = styled.div`
    width: 84px;
    display: flex;
    flex-direction: column;
    background: #333333;
    color: #8e8e8e;
`;

const ActivityItem = styled.div<{ $active?: boolean }>`
    height: 84px;
    display: flex;
    align-items: center;
    justify-content: center;
    border-left: 3px solid ${(p) => (p.$active ? '#fff' : 'transparent')};
    padding-right: 3px;
`;

const ActivitySpacer = styled.div`
    flex: 1;
`;

const SideBar = styled.div`
    width: 453px;
    display: flex;
    flex-direction: column;
    background: #252526;
    color: #cccccc;
`;

const SideHeader = styled.div`
    height: 63px;
    display: flex;
    align-items: center;
    justify-content: space-between;
    padding: 0 28px 0 35px;
    font-size: 18.7px;
    color: #b4b4b4;
`;

const RootRow = styled.div`
    height: 38px;
    display: flex;
    align-items: center;
    padding-left: 5px;
    gap: 5px;
    font-size: 18.6px;
    font-weight: 700;
`;

const TreeRow = styled.div<{ $depth: number; $active?: boolean }>`
    height: 38.5px;
    flex: none;
    display: flex;
    align-items: center;
    padding-left: ${(p) => 28 + p.$depth * 15}px;
    background: ${(p) => (p.$active ? '#37373d' : 'transparent')};
    font-size: 21px;
`;

const TreeIcon = styled.span`
    width: 31px;
    display: flex;
    align-items: center;
`;

const SideSpacer = styled.div`
    flex: 1;
`;

const CollapsedPane = styled.div`
    height: 38.5px;
    flex: none;
    display: flex;
    align-items: center;
    padding-left: 5px;
    gap: 5px;
    border-top: 2px solid #3c3c3c;
    font-size: 18.6px;
    font-weight: 700;
`;

const EditorColumn = styled.div`
    flex: 1;
    min-width: 0;
    display: flex;
    flex-direction: column;
    background: #1e1e1e;
`;

const TabStrip = styled.div`
    height: 62px;
    flex: none;
    display: flex;
    background: #252526;
`;

const Tab = styled.div<{ $active?: boolean }>`
    width: ${(p) => (p.$active ? 210 : 217)}px;
    display: flex;
    align-items: center;
    gap: 13px;
    padding: 0 13px 0 25px;
    background: ${(p) => (p.$active ? '#1e1e1e' : '#2d2d2d')};
    color: ${(p) => (p.$active ? '#fff' : '#969696')};
    font-size: 21px;
`;

const TabLabel = styled.span`
    flex: 1;
`;

const EditorActions = styled.div`
    margin-left: auto;
    display: flex;
    align-items: center;
    gap: 16px;
    padding-right: 40px;
    color: #c5c5c5;

    > :nth-child(2) {
        margin: 0 1px 0 -10px;
    }
`;

const Breadcrumb = styled.div`
    height: 38px;
    flex: none;
    display: flex;
    align-items: center;
    gap: 6px;
    padding-left: 36px;
    background: #1e1e1e;
    color: #a0a0a0;
    font-size: 21px;
    box-shadow: 0 3px 6px #000;
    position: relative;
    z-index: 1;
`;

const CodeArea = styled.div`
    flex: 1;
    min-height: 0;
    display: flex;
    overflow: hidden;
`;

const LineNumbers = styled.div`
    width: 118px;
    flex: none;
    padding: 8px 44px 0 0;
    font-family: ${monoFont};
    font-size: 22.4px;
    line-height: 33.27px;
    text-align: right;
`;

const LineNumber = styled.div<{ $current?: boolean }>`
    height: 33.27px;
    color: ${(p) => (p.$current ? '#c6c6c6' : '#858585')};
`;

const CodePane = styled.div`
    position: relative;
    flex: 1;
    min-width: 0;
    padding-top: 8px;
    overflow: hidden;
    border-left: 2px solid #5a5a5a;
    font-family: ${monoFont};
    font-size: 22.4px;
    line-height: 33.27px;
    white-space: pre;
`;

const CurrentLine = styled.div`
    position: absolute;
    top: 473px;
    left: 0;
    right: 0;
    height: 33.27px;
    border-top: 2px solid #2a2a2a;
    border-bottom: 2px solid #2a2a2a;
`;

const IndentGuides = styled.div`
    position: absolute;
    top: 341px;
    left: 52px;
    height: 100px;
    display: flex;
    gap: 52.8px;
`;

const IndentGuide = styled.div`
    width: 1.5px;
    height: 100%;
    background: #404040;
`;

const CodeLine = styled.div`
    height: 33.27px;
`;

const Token = styled.span<{ $c: string }>`
    color: ${(p) => p.$c};
`;

const Minimap = styled.div`
    width: 122px;
    flex: none;
    padding: 2px 0 0 8px;
    box-shadow: -3px 0 4px rgba(0, 0, 0, 0.35);
    overflow: hidden;
`;

const ScrollGutter = styled.div`
    width: 30px;
    flex: none;
    position: relative;
    border-left: 1px solid #2b2b2b;
`;

const ScrollMark = styled.div<{ $top: number }>`
    position: absolute;
    top: ${(p) => p.$top}px;
    left: 0;
    right: 0;
    height: 3px;
    background: #8a8a8a;
`;

const Panel = styled.div`
    height: 208px;
    flex: none;
    display: flex;
    flex-direction: column;
    border-top: 2px solid #414141;
`;

const PanelHeader = styled.div`
    height: 50px;
    flex: none;
    display: flex;
    align-items: stretch;
    padding-left: 33px;
    gap: 36px;
`;

const PanelTab = styled.div<{ $active?: boolean }>`
    display: flex;
    align-items: center;
    padding: 10px 3px 0;
    font-size: 18.3px;
    color: ${(p) => (p.$active ? '#e7e7e7' : '#969696')};
    border-bottom: 2px solid ${(p) => (p.$active ? '#e7e7e7' : 'transparent')};
`;

const PanelTools = styled.div`
    margin-left: auto;
    display: flex;
    align-items: center;
    gap: 20px;
    padding: 10px 34px 0 0;
    color: #c5c5c5;
`;

const OutputSelect = styled.div`
    width: 298px;
    height: 40px;
    display: flex;
    align-items: center;
    justify-content: space-between;
    padding: 0 12px 0 15px;
    margin-right: -7px;
    background: #3c3c3c;
    border-radius: 4px;
    color: #f0f0f0;
    font-size: 21px;
`;

const OutputBody = styled.div`
    flex: 1;
    display: flex;
`;

const OutputText = styled.div`
    flex: 1;
    padding: 10px 0 0 36px;
    font-family: ${monoFont};
    font-size: 22.4px;
    line-height: 33px;
    white-space: pre;
`;

const StatusBar = styled.div`
    height: 38px;
    flex: none;
    display: flex;
    align-items: center;
    background: #007acc;
    color: #fff;
    font-size: 20px;
`;

const RemoteBadge = styled.div`
    width: 60px;
    height: 100%;
    display: flex;
    align-items: center;
    justify-content: center;
    background: #16825d;
`;

const StatusLeft = styled.div`
    display: flex;
    align-items: center;
    gap: 4px;
    padding-left: 18px;
`;

const StatusGap = styled.span`
    width: 20px;
`;

const StatusRight = styled.div`
    margin-left: auto;
    display: flex;
    align-items: center;
    gap: 28px;
    padding-right: 30px;
`;

const StatusPair = styled.span`
    display: flex;
    align-items: center;
    gap: 10px;
`;

const TopTaskbar = styled.div`
    height: 84px;
    flex: none;
    display: flex;
    align-items: center;
    background: #30271a;
    border-top: 2px solid #4b4336;
`;

const TaskSlot = styled.div<{ $ml: number; $dot?: boolean }>`
    position: relative;
    display: flex;
    margin-left: ${(p) => p.$ml}px;

    &::after {
        content: '';
        display: ${(p) => (p.$dot ? 'block' : 'none')};
        position: absolute;
        left: 50%;
        bottom: -11px;
        width: 10px;
        height: 5px;
        margin-left: -5px;
        border-radius: 3px;
        background: #a8a8a0;
    }
`;

const SearchPill = styled.div<{ $w: number; $h: number; $ml: number }>`
    width: ${(p) => p.$w}px;
    height: ${(p) => p.$h}px;
    margin-left: ${(p) => p.$ml}px;
    display: flex;
    align-items: center;
    padding: 0 6px 0 20px;
    background: #4c4537;
    border: 2px solid #5c5548;
    border-radius: ${(p) => p.$h / 2}px;
`;

const PillIcon = styled(VscSearch)`
    color: #e4e4e4;
    transform: scaleX(-1);
`;

const PillText = styled.span<{ $gap: number }>`
    flex: 1;
    margin-left: ${(p) => p.$gap}px;
    color: #d4d2cc;
    font-size: 23px;
`;

const TopClock = styled.div`
    margin-left: auto;
    padding-right: 49px;
    display: flex;
    flex-direction: column;
    align-items: flex-end;
    gap: 6px;
    color: #e6e6e6;
    font-size: 19.5px;
    line-height: 23px;
`;

const FigureTitle = styled.div`
    height: 45px;
    flex: none;
    display: flex;
    align-items: center;
    padding-left: 3px;
    background: #f3f3f3;
`;

const FigureName = styled.span`
    margin-left: 5px;
    color: #8a8a8a;
    font-size: 22.7px;
`;

const Canvas = styled.div`
    flex: 1;
    min-height: 0;
    display: flex;
    flex-direction: column;
    background: #fff;
`;

const ChartTitle = styled.div`
    margin-top: 144px;
    text-align: center;
    width: 2802px;
    font-family: ${plotFont};
    font-size: 33.4px;
    line-height: 42px;
    color: #000;
`;

const ChartHolder = styled.div`
    margin: 109px 0 0 820px;
    height: 1100px;
`;

const SliderRow = styled.div`
    margin-top: 141px;
    display: flex;
    align-items: center;
    padding-left: 553px;
    font-family: ${plotFont};
    font-size: 27.5px;
    color: #000;
`;

const SliderLabel = styled.span`
    width: 131px;
`;

const SliderTrack = styled.div`
    position: relative;
    width: 1368px;
    height: 24px;
    background: #d3d3d3;
`;

const SliderFill = styled.div`
    height: 100%;
    background: #1f77b4;
`;

const SliderKnob = styled.div`
    position: absolute;
    top: -3px;
    width: 30px;
    height: 30px;
    margin-left: -15px;
    border-radius: 50%;
    background: #fff;
    border: 3px solid #bfbfbf;
`;

const SliderValue = styled.span`
    margin-left: 29px;
`;

const Toolbar = styled.div`
    height: 74px;
    flex: none;
    display: flex;
    align-items: center;
    padding: 0 0 0 6px;
    gap: 11px;
    background: #efefef;
`;

const ToolGlyph = styled.div`
    display: flex;
`;

const ToolSep = styled.div`
    width: 1px;
    height: 48px;
    margin: 0 2px;
    background: #b4b4b4;
`;

const BottomTaskbar = styled.div`
    height: 95px;
    flex: none;
    display: flex;
    align-items: center;
    background: #2f2718;
    border-top: 2px solid #4b4336;
`;

const Tray = styled.div`
    display: flex;
    align-items: center;
    margin-left: 154px;
`;

const TraySvg = styled.svg<{ $ml: number }>`
    margin-left: ${(p) => p.$ml}px;
    flex: none;
`;

const FeatherSlot = styled.div`
    width: 63px;
    height: 80px;
    margin-left: 11px;
    display: flex;
    align-items: center;
    justify-content: center;
    background: #3b3527;
    border-radius: 10px;
`;

const TrayText = styled.span`
    margin-left: 37px;
    color: #fff;
    font-size: 22px;
`;

const BottomClock = styled.div`
    margin-left: auto;
    display: flex;
    flex-direction: column;
    align-items: flex-end;
    gap: 6px;
    color: #fff;
    font-size: 23px;
    line-height: 26px;
`;

const BellHolder = styled.div`
    display: flex;
    margin: 0 40px 0 18px;
`;

export default App;
